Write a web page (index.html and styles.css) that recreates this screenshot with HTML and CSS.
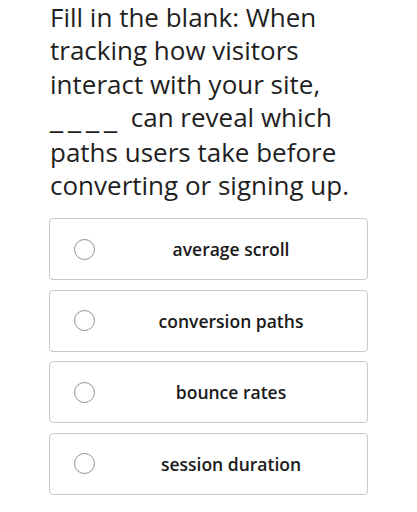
FILE: index.html
```html
<!DOCTYPE html>
<html lang="en">
<head>
    <meta charset="UTF-8">
    <meta name="viewport" content="width=device-width, initial-scale=1.0">
    <title>Fill in the blank</title>
    <link rel="stylesheet" href="styles.css">
</head>
<body>

    <div class="quiz">
        <p class="question">Fill in the blank: When tracking how visitors interact with your site, <span class="blank">____</span> can reveal which paths users take before converting or signing up.</p>

        <div class="options">
            <label class="option">
                <span class="radio"></span>
                <span class="option-text">average scroll</span>
            </label>
            <label class="option">
                <span class="radio"></span>
                <span class="option-text">conversion paths</span>
            </label>
            <label class="option">
                <span class="radio"></span>
                <span class="option-text">bounce rates</span>
            </label>
            <label class="option">
                <span class="radio"></span>
                <span class="option-text">session duration</span>
            </label>
        </div>
    </div>

</body>
</html>
```

FILE: styles.css
```css
body {
    font-family: 'Open Sans', sans-serif;
    background: white;
    color: #1f1f1f;
    margin: 0;
    padding: 0;
}

.quiz {
    padding: 0 49px;
}

.question {
    font-size: 26px;
    line-height: 33.4px;
    margin: 1px 0 16px;
    padding-left: 1px;
}

.blank {
    font-family: 'DejaVu Sans', sans-serif;
    letter-spacing: 5px;
    margin-right: 2px;
}

.options {
    display: flex;
    flex-direction: column;
    gap: 9.5px;
}

.option {
    display: flex;
    align-items: center;
    height: 62px;
    border: 1px solid #c8c8c8;
    border-radius: 4px;
    box-sizing: border-box;
    cursor: pointer;
}

.radio {
    width: 21px;
    height: 21px;
    margin-left: 24px;
    border: 1px solid #8f8f8f;
    border-radius: 50%;
    box-sizing: border-box;
    flex-shrink: 0;
}

.option-text {
    flex: 1;
    text-align: center;
    font-size: 17.5px;
    font-weight: 600;
    color: #1a1a1a;
}
```
